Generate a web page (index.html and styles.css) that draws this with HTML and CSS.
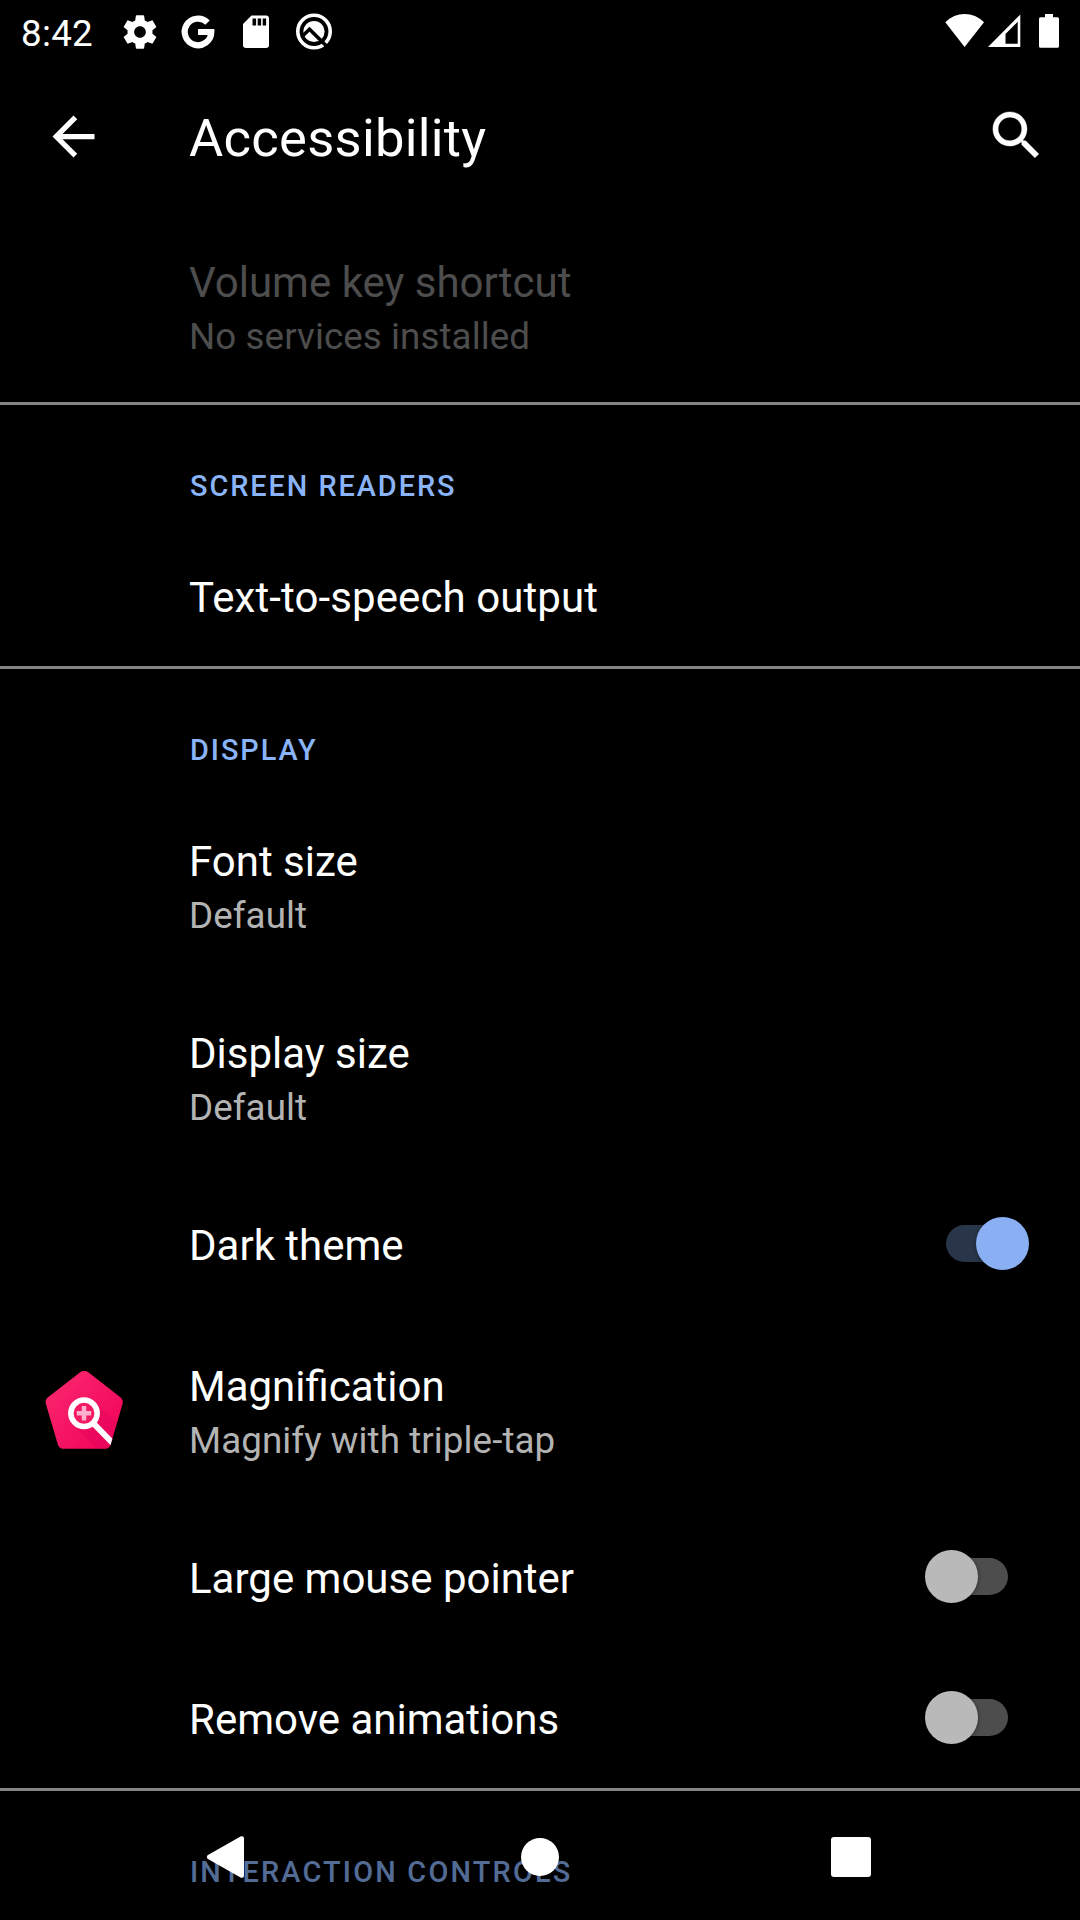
FILE: index.html
```html
<!DOCTYPE html>
<html lang="en">
<head>
<meta charset="utf-8">
<title>Accessibility</title>
<link rel="stylesheet" href="styles.css">
</head>
<body>
<div class="screen">
  <header class="status">
    <span class="clock">8:42</span>
    <div class="notifications">
      <svg width="40" height="40" viewBox="0 0 24 24"><path fill="#fff" d="M19.43 12.98c.04-.32.07-.64.07-.98s-.03-.66-.07-.98l2.11-1.65c.19-.15.24-.42.12-.64l-2-3.46c-.12-.22-.39-.3-.61-.22l-2.49 1c-.52-.4-1.08-.73-1.69-.98l-.38-2.65C14.46 2.18 14.25 2 14 2h-4c-.25 0-.46.18-.49.42l-.38 2.65c-.61.25-1.17.59-1.69.98l-2.49-1c-.23-.09-.49 0-.61.22l-2 3.46c-.13.22-.07.49.12.64l2.11 1.65c-.04.32-.07.65-.07.98s.03.66.07.98l-2.11 1.65c-.19.15-.24.42-.12.64l2 3.46c.12.22.39.3.61.22l2.49-1c.52.4 1.08.73 1.69.98l.38 2.65c.03.24.24.42.49.42h4c.25 0 .46-.18.49-.42l.38-2.65c.61-.25 1.17-.59 1.69-.98l2.49 1c.23.09.49 0 .61-.22l2-3.46c.12-.22.07-.49-.12-.64l-2.11-1.65zM12 15.5c-1.930 0-3.500-1.570-3.500-3.500s1.570-3.500 3.500-3.500 3.500 1.570 3.500 3.500-1.570 3.500-3.500 3.500z"/></svg>
      <svg width="40" height="40" viewBox="0 0 40 40"><path fill="none" stroke="#fff" stroke-width="6.200" d="M29.500 10.600A13.300 13.300 0 1 0 33.300 20H20"/></svg>
      <svg width="40" height="40" viewBox="0 0 40 40"><path fill="#fff" d="M15.500 3.500H30a3 3 0 0 1 3 3V33a3 3 0 0 1-3 3H10a3 3 0 0 1-3-3V12z"/><path d="M16.500 6.500h3.600v7h-3.600zM21.700 6.500h3.400v7h-3.400zM26.700 6.500h3.400v7h-3.400z"/></svg>
      <svg width="40" height="40" viewBox="0 0 40 40"><circle cx="20" cy="19.500" r="16.200" fill="none" stroke="#fff" stroke-width="3.600"/><circle cx="20" cy="19.500" r="10.600" fill="#fff"/><path fill="none" stroke="#000" stroke-width="3.600" d="M8 24.500L15.500 17.300L33 34.500"/></svg>
    </div>
    <div class="system">
      <svg width="40" height="36" viewBox="0 0 40 36"><path fill="#fff" d="M.3 10.300Q8.500 2 19.600 2T39 10.300L19.600 35z"/></svg>
      <svg class="signal" width="34" height="36" viewBox="0 0 34 36"><path fill="#fff" fill-rule="evenodd" d="M0 35L32.300 2.500V35zM17.500 31.700H29.700V9.700L17.500 22z"/></svg>
      <svg class="battery" width="20" height="36" viewBox="0 0 20 36"><path fill="#fff" d="M6 2h8v3.300h4.500A1.500 1.500 0 0 1 20 6.800v27.400a1.500 1.500 0 0 1-1.500 1.500h-17A1.500 1.500 0 0 1 0 34.200V6.800a1.500 1.500 0 0 1 1.500-1.500H6z"/></svg>
    </div>
  </header>

  <div class="toolbar">
    <svg class="back" width="63" height="63" viewBox="0 0 24 24"><path fill="#fff" d="M20 11H7.830l5.590-5.590L12 4l-8 8 8 8 1.410-1.410L7.830 13H20v-2z"/></svg>
    <h1 class="heading">Accessibility</h1>
    <svg class="search" width="63" height="63" viewBox="0 0 24 24"><path fill="#fff" stroke="#fff" stroke-width=".15" d="M15.500 14h-.79l-.28-.27C15.410 12.590 16 11.110 16 9.500 16 5.910 13.090 3 9.500 3S3 5.910 3 9.500 5.910 16 9.500 16c1.610 0 3.090-.59 4.230-1.570l.27.28v.79l5 4.990L20.490 19l-4.990-5zm-6 0C7.010 14 5 11.990 5 9.500S7.010 5 9.500 5 14 7.010 14 9.500 11.990 14 9.500 14z"/></svg>
  </div>

  <main class="list">
    <div class="row tall disabled">
      <div class="label"><div class="title">Volume key shortcut</div><div class="summary">No services installed</div></div>
    </div>
    <h2 class="category">SCREEN READERS</h2>
    <div class="row"><div class="label"><div class="title speech">Text-to-speech output</div></div></div>
    <h2 class="category">DISPLAY</h2>
    <div class="row tall">
      <div class="label"><div class="title">Font size</div><div class="summary">Default</div></div>
    </div>
    <div class="row tall">
      <div class="label"><div class="title">Display size</div><div class="summary">Default</div></div>
    </div>
    <div class="row">
      <div class="label"><div class="title">Dark theme</div></div>
      <div class="switch on"><div class="thumb"></div></div>
    </div>
    <div class="row tall">
      <svg class="app-icon" width="78" height="80" viewBox="0 0 78 80">
        <defs>
          <linearGradient id="pink" x1="0" y1="0" x2="1" y2="1"><stop offset="0" stop-color="#fb2a70"/><stop offset=".55" stop-color="#f51362"/><stop offset="1" stop-color="#f20058"/></linearGradient>
          <clipPath id="pentagon"><path d="M35.500 1Q39.200 -1.500 43 1L75.700 26.500Q78.500 29 77.500 33L65.500 74Q64 77.700 60.500 77.700H18Q14.500 77.700 13 74L.9 33Q0 29 2.700 26.500z"/></clipPath>
        </defs>
        <g clip-path="url(#pentagon)">
          <path fill="url(#pink)" d="M0 0h78v80H0z"/>
          <path fill="#d8005a" fill-opacity=".3" d="M28 53.500L50.500 31L80 60V100H75z"/>
          <path stroke="#fff" stroke-width="6" d="M49.500 53.500L70 74.500"/>
        </g>
        <circle cx="39" cy="42.300" r="13.200" fill="#f51a65" stroke="#fff" stroke-width="5.500"/>
        <path stroke="#ffb0cc" stroke-width="4.500" d="M31.800 42.300h14.400M39 35.100v14.400"/>
      </svg>
      <div class="label"><div class="title">Magnification</div><div class="summary">Magnify with triple-tap</div></div>
    </div>
    <div class="row">
      <div class="label"><div class="title">Large mouse pointer</div></div>
      <div class="switch"><div class="thumb"></div></div>
    </div>
    <div class="row">
      <div class="label"><div class="title">Remove animations</div></div>
      <div class="switch"><div class="thumb"></div></div>
    </div>
    <h2 class="category wide">INTERACTION CONTROLS</h2>
  </main>

  <nav class="navbar">
    <svg width="42" height="44" viewBox="0 0 42 44"><path fill="#fff" d="M3.500 20.300L37 1.300Q40 .5 40 3.500V40.500Q40 43.500 37 42.700L3.500 23.700Q2 22 3.500 20.300z"/></svg>
    <div class="home"></div>
    <div class="recents"></div>
  </nav>
</div>
</body>
</html>
```
FILE: styles.css
```css
body {
  margin: 0;
  background: #000;
  color: #fff;
  font-family: Roboto, "Noto Sans", sans-serif;
}

.screen {
  position: relative;
  width: 1080px;
  height: 1920px;
  overflow: hidden;
  background: #000;
}

svg { display: block; flex: none; }

.status {
  display: flex;
  height: 63px;
  box-sizing: border-box;
  padding: 0 21px;
}

.clock {
  width: 99px;
  font-size: 36.75px;
  line-height: 67px;
  letter-spacing: .3px;
}

.notifications {
  display: flex;
  gap: 18px;
  padding-top: 12px;
}

.system {
  display: flex;
  margin-left: auto;
  padding-top: 12px;
}

.signal { margin-left: 3px; }
.battery { margin-left: 17px; }

.toolbar {
  display: flex;
  height: 147px;
}

.back { margin: 42px 0 0 42px; }

.heading {
  flex: 1;
  margin: 0 0 0 84px;
  font-size: 52.5px;
  font-weight: 400;
  line-height: 62px;
  padding-top: 44px;
  letter-spacing: .28px;
}

.search { margin: 41px 32px 0 0; }

.row {
  display: flex;
  position: relative;
  height: 141px;
  box-sizing: border-box;
  padding: 45px 51px 0 189px;
}

.row.tall { height: 192px; }
.label { flex: 1; }

.title {
  font-size: 42px;
  line-height: 56px;
}

.title.speech { letter-spacing: .1px; }

.summary {
  font-size: 36.75px;
  line-height: 51px;
  color: #b3b3b3;
  letter-spacing: .08px;
}

.disabled .title,
.disabled .summary { color: #4d4d4d; }

.category {
  height: 123px;
  box-sizing: border-box;
  margin: 0;
  padding: 63px 0 0 190px;
  border-top: 3px solid #858585;
  color: #8ab4f8;
  font-size: 28.875px;
  font-weight: 500;
  line-height: 36px;
  letter-spacing: 1.95px;
}

.category.wide { letter-spacing: 2.2px; }

.switch {
  width: 62px;
  height: 37px;
  margin: 7px 21px 0 0;
  border-radius: 19px;
  background: #4d4d4d;
}

.thumb {
  width: 53px;
  height: 53px;
  margin: -8px 0 0 -21px;
  border-radius: 50%;
  background: #b9b9b9;
  box-shadow: 0 1px 4px rgba(0, 0, 0, .4);
}

.switch::before { content: ""; display: table; }
.switch.on { background: #29364a; }
.switch.on .thumb { margin-left: 30px; background: #8ab0f3; }

.app-icon {
  margin: 12px 66px 0 -144px;
}

.navbar {
  position: absolute;
  left: 0;
  right: 0;
  bottom: 0;
  height: 126px;
  box-sizing: border-box;
  display: flex;
  align-items: center;
  justify-content: space-between;
  padding: 0 209px 0 204px;
  background: rgba(0, 0, 0, .4);
}

.home {
  width: 38px;
  height: 38px;
  margin-left: 3px;
  border-radius: 50%;
  background: #fff;
}

.recents {
  width: 40px;
  height: 40px;
  border-radius: 3px;
  background: #fff;
}
```
